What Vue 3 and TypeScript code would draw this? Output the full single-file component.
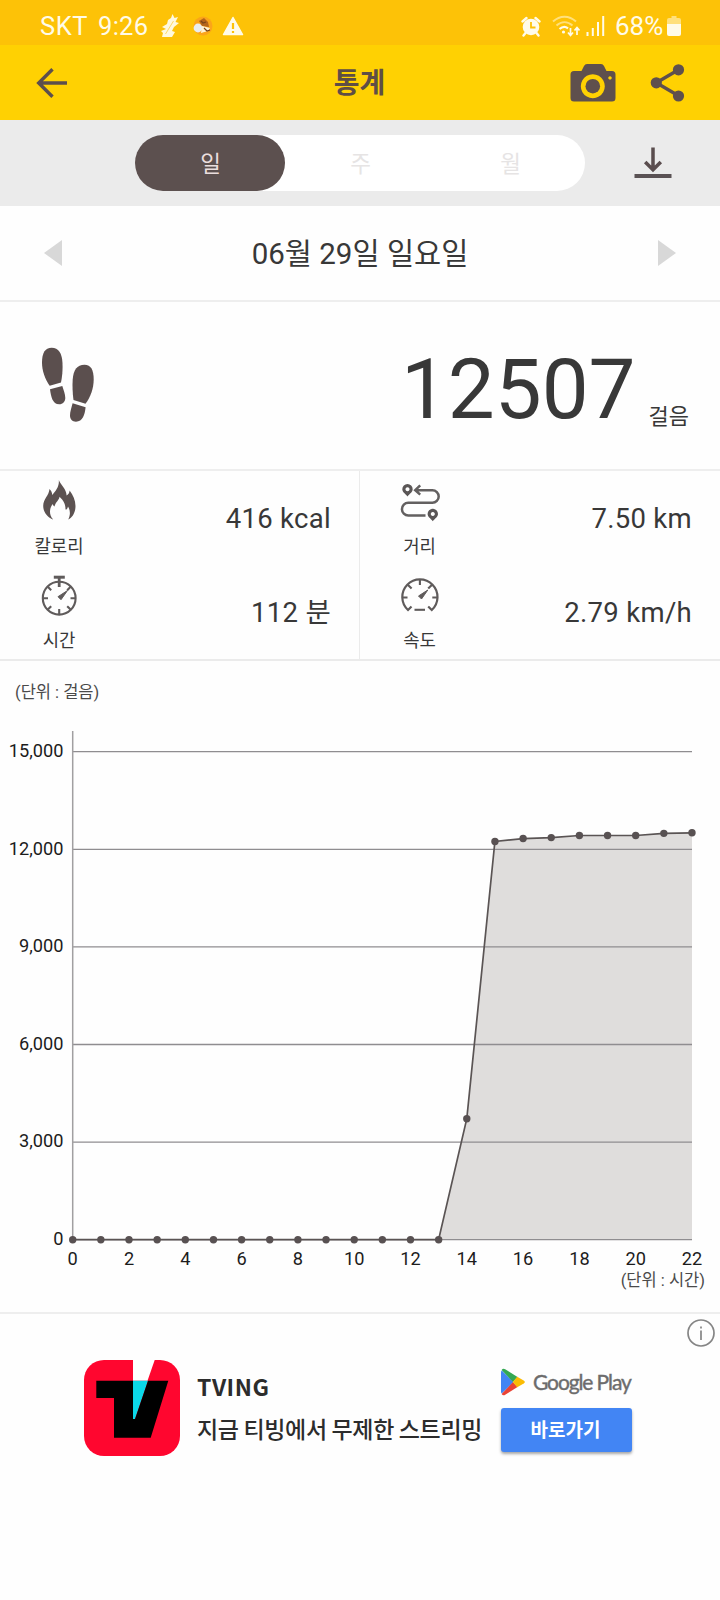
<script setup lang="ts">
const yTicks: number[] = [0, 3000, 6000, 9000, 12000, 15000]
const steps: number[] = [
  0, 0, 0, 0, 0, 0, 0, 0, 0, 0, 0, 0, 0, 0,
  3720, 12240, 12330, 12360, 12425, 12425, 12425, 12490, 12507,
]

const left = 72.7
const right = 692
const bottom = 578.7
const unit = 97.6 / 3000

const px = (hour: number): number => left + (hour * (right - left)) / 22
const py = (value: number): number => bottom - value * unit

const points = steps.map((value, hour) => ({ x: px(hour), y: py(value) }))
const line = points.map((p) => `${p.x.toFixed(1)},${p.y.toFixed(1)}`).join(' ')
const area = `${left},${bottom} ${line} ${right},${bottom}`
const xTicks = steps.map((_, hour) => hour).filter((hour) => hour % 2 === 0)
</script>

<template>
  <div class="screen">
    <div class="status">
      <span class="carrier">SKT</span>
      <span class="clock">9:26</span>
      <svg class="s-bolt" width="20" height="26" viewBox="0 0 20 26">
        <path d="M12.500 1l2 4 3.500-1-2.500 5 3.500 1-5 4-2 4 3 1-3 5H2l1-4-2-2 5-2-4-2 5-3 1-4 3-2z" fill="#fff9df" />
        <path d="M5.500 21l8-13" stroke="#fdd96a" stroke-width="1" />
      </svg>
      <svg class="s-face" width="20" height="20" viewBox="0 0 20 20">
        <circle cx="10" cy="10" r="9.500" fill="#fba519" />
        <path d="M6 5l5-3 4 4 1 5-7-1z" fill="#b5651a" />
        <circle cx="5" cy="12" r="4.400" fill="#e9edf0" />
        <path d="M9 10l8 2-2 3-7 2z" fill="#fff3d5" />
        <path d="M8 5l2 2 3-1M11 12l3 3 3-1" stroke="#7a4518" stroke-width="1.200" fill="none" />
      </svg>
      <svg class="s-warn" width="22" height="20" viewBox="0 0 22 20">
        <path d="M11 1.500L20.500 18.500H1.500z" fill="#fffbe9" stroke="#fffbe9" stroke-width="1.500" stroke-linejoin="round" />
        <path d="M11 7v6M11 15v2" stroke="#fdc207" stroke-width="2.200" />
      </svg>
      <span class="grow"></span>
      <svg class="s-alarm" width="20" height="21" viewBox="0 0 20 21">
        <circle cx="10" cy="11" r="8.300" fill="#fffbe9" />
        <path d="M1.500 5.500l4-3.500M18.500 5.500l-4-3.500M4.500 17l-2 2.500M15.500 17l2 2.500" stroke="#fffbe9" stroke-width="2.400" stroke-linecap="round" />
        <path d="M10 6v5.500h4.500" stroke="#fdc207" stroke-width="1.800" fill="none" />
      </svg>
      <svg class="s-wifi" width="28" height="22" viewBox="0 0 28 22">
        <path d="M1 6.500c7-6.500 16-6.500 23 0M4.500 10.500c5-4.500 11-4.500 16 0" stroke="#ffe07c" stroke-width="2" fill="none" />
        <path d="M7.500 14c3-2.700 6-2.700 8.500-.7" stroke="#fffbe9" stroke-width="2.200" fill="none" />
        <circle cx="11.500" cy="17" r="1.600" fill="#fffbe9" />
        <path d="M18.500 13v7M16 17.500l2.500 3 2.500-3M25 20v-7M22.500 15.500l2.500-3 2.500 3" stroke="#fffbe9" stroke-width="1.700" fill="none" />
      </svg>
      <svg class="s-signal" width="19" height="20" viewBox="0 0 19 20">
        <path d="M1.500 16v4M6.800 12v8M12 6v14M17.200 0v20" stroke="#fffbe9" stroke-width="2" />
      </svg>
      <span class="percent">68%</span>
      <svg class="s-batt" width="14" height="20" viewBox="0 0 14 20">
        <path d="M4.500 0h5v2H12q2 0 2 2v4H0V4q0-2 2-2h2.500z" fill="#ffe07c" />
        <path d="M0 8h14v10q0 2-2 2H2q-2 0-2-2z" fill="#fffbe9" />
      </svg>
    </div>

    <header class="header">
      <svg class="back" width="32" height="32" viewBox="0 0 32 32">
        <path d="M31 16H3.500M16.500 2.200L2.700 16l13.800 13.800" fill="none" stroke="#5d4f4d" stroke-width="3.400" />
      </svg>
      <h1 class="title">통계</h1>
      <div class="actions">
        <svg width="46" height="40" viewBox="0 0 46 40">
          <path fill-rule="evenodd" fill="#5f504d" d="M11.500 8L14 3q1-2 3-2h14q2 0 3 2l2.500 5H42q3.500 0 3.500 3.500V35q0 3.500-3.500 3.500H4Q.5 38.500.5 35V11.500Q.5 8 4 8zM22.800 11.200a12 12 0 1 0 .01 0zM40 13.200a1.700 1.700 0 1 0 .01 0z" />
          <circle cx="22.800" cy="23.200" r="7.300" fill="#5f504d" />
        </svg>
        <svg class="share" width="35" height="40" viewBox="0 0 35 40">
          <path d="M28.500 6.800L6.300 19.800l22.200 13" fill="none" stroke="#5f504d" stroke-width="3.400" />
          <circle cx="28.500" cy="6.800" r="5.600" fill="#5f504d" />
          <circle cx="6.300" cy="19.800" r="5.600" fill="#5f504d" />
          <circle cx="28.500" cy="33" r="5.600" fill="#5f504d" />
        </svg>
      </div>
    </header>

    <nav class="period">
      <div class="pill">
        <button class="tab active">일</button>
        <button class="tab">주</button>
        <button class="tab">월</button>
      </div>
      <svg class="download" width="38" height="34" viewBox="0 0 38 34">
        <path d="M19 1.500v21M11.200 16L19 23.800 26.800 16" fill="none" stroke="#5a4d4e" stroke-width="3.500" />
        <path d="M.500 30h37" stroke="#5a5254" stroke-width="3.800" />
      </svg>
    </nav>

    <section class="date">
      <svg width="18" height="26" viewBox="0 0 18 26"><path d="M18 0v26L0 13z" fill="#d8d8d8" /></svg>
      <span class="date-text">06월 29일 일요일</span>
      <svg width="18" height="26" viewBox="0 0 18 26"><path d="M0 0v26l18-13z" fill="#d8d8d8" /></svg>
    </section>

    <section class="total">
      <svg class="feet" width="60" height="86" viewBox="0 0 60 86" fill="#5b4f4e">
        <path d="M13.700 7.700C20.500 7.700 24 13 24.500 23 24.800 30 24.300 36 23 42.500L11.700 45.700C7 39 4 31 4 22.500 4 13 7 7.700 13.700 7.700z" />
        <path d="M12 49.300L24.300 46c1.200 4 3 8 3 12 0 3.500-2.500 6.300-6 6.300-7 0-8.300-8-9.300-15z" />
        <path d="M46.500 24.700c6.500 0 9.200 5.300 9.200 14.800 0 9-3.200 17.500-8.200 24.300L35.500 60C34.500 53 34.300 46 34.700 39.500 35.300 30 39 24.700 46.500 24.700z" />
        <path d="M34.600 63.300l13 4c-.8 7.500-2.800 14.400-9.600 14.400-3.700 0-6-2.500-6-6.200 0-4 1.600-8 2.600-12.200z" />
      </svg>
      <div class="count">
        <span class="number">12507</span>
        <span class="step-unit">걸음</span>
      </div>
    </section>

    <section class="metrics">
      <div class="metric">
        <div class="kind">
          <svg width="48" height="48" viewBox="0 0 48 48">
            <path fill="#5c5251" d="M23.800 1C26 6.500 31.300 9.500 31.600 16.500 33.500 15.500 34.500 13.500 34.600 11.500 38 16 40.500 21 40.500 27 40.500 33.500 37.500 38.500 33.200 40.500 35.500 36 35.500 31.500 33 27.500 32.500 29.500 32 30.500 30.500 30.500 30.500 25 28.500 21.500 24.500 17.700 24.300 21 20.500 23 19.500 27.500 18.500 27 18 26 17.800 25 14.500 29 13.500 35.500 18.200 40.500 12.500 38.500 8.200 33 8.200 27 8.200 20 14 16.500 14.500 10 16.500 12 17 13.500 17.200 16 21 12 24.500 7 23.800 1z" />
          </svg>
          <span>칼로리</span>
        </div>
        <span class="value">416 kcal</span>
      </div>
      <div class="metric end">
        <div class="kind">
          <svg width="48" height="48" viewBox="0 0 48 48">
            <path d="M19.500 11.200h16.900a6.300 6.300 0 0 1 0 12.600H12.300a6.350 6.350 0 0 0 0 12.700h17.200M24.200 6.300l-5 4.900 5 4.400" fill="none" stroke="#636060" stroke-width="2.500" />
            <path fill-rule="evenodd" fill="#5a5656" d="M11.500 5a5.200 5.200 0 0 1 5.200 5.200c0 3-3.300 4.600-5.200 7.300-1.900-2.700-5.200-4.300-5.200-7.300a5.200 5.200 0 0 1 5.200-5.200zm0 3.200a2 2 0 1 0 .01 0zM36.800 29.800a5.200 5.200 0 0 1 5.200 5.200c0 3-3.300 4.600-5.200 7.300-1.900-2.700-5.200-4.300-5.200-7.300a5.200 5.200 0 0 1 5.200-5.200zm0 3.200a2 2 0 1 0 .01 0z" />
          </svg>
          <span>거리</span>
        </div>
        <span class="value">7.50 km</span>
      </div>
      <div class="metric">
        <div class="kind">
          <svg width="48" height="48" viewBox="0 0 48 48" fill="none" stroke="#5f5b5b">
            <circle cx="24.200" cy="25.200" r="16.400" stroke-width="2.100" />
            <path d="M18.800 4.200h11" stroke-width="3" />
            <path d="M24.200 4v10" stroke-width="2.800" />
            <path d="M24.200 36v5M8 25.200h5M35.500 25.200h5M12.800 13.800l3.400 3.400M35.600 13.800l-3.400 3.400M12.800 36.600l3.400-3.400M35.600 36.600l-3.400-3.400" stroke-width="2.100" />
            <path d="M32.500 17.500l-6.500 9.200-3-3z" fill="#5f5b5b" stroke-width="1" />
          </svg>
          <span>시간</span>
        </div>
        <span class="value">112 분</span>
      </div>
      <div class="metric end">
        <div class="kind">
          <svg width="48" height="48" viewBox="0 0 48 48" fill="none" stroke="#5f5b5b">
            <path d="M15.500 33.500l-3.500 3.500A17.600 17.600 0 1 1 35.800 37l-3.600-3.500" stroke-width="2.200" />
            <path d="M23.900 7v5M6.500 24.500h5M36.300 24.500h5M12 12l3.600 3.600M35.800 12l-3.600 3.600" stroke-width="2.100" />
            <path d="M18.500 36.800h10.500" stroke-width="2.100" />
            <path d="M31.800 17l-6.300 9-3-3z" fill="#5f5b5b" stroke-width="1" />
          </svg>
          <span>속도</span>
        </div>
        <span class="value">2.79 km/h</span>
      </div>
    </section>

    <section class="chart">
      <p class="unit y-unit">(단위 : 걸음)</p>
      <svg class="plot" width="720" height="651" viewBox="0 0 720 651">
        <polygon :points="area" fill="#dfdddc" />
        <path
          v-for="t in yTicks"
          :key="t"
          :d="`M${left} ${py(t)}H${right}`"
          stroke="#8f8d90"
          stroke-width="1.3"
        />
        <path :d="`M${left} 70V${bottom}`" stroke="#a19fa1" stroke-width="1.5" />
        <polyline :points="line" fill="none" stroke="#5a5454" stroke-width="1.7" />
        <circle v-for="(p, i) in points" :key="i" :cx="p.x" :cy="p.y" r="3.700" fill="#585152" />
        <text v-for="t in yTicks" :key="'y' + t" class="tick" x="63.500" :y="py(t) + 5.300" text-anchor="end">
          {{ t.toLocaleString('en-US') }}
        </text>
        <text v-for="t in xTicks" :key="'x' + t" class="tick" :x="px(t)" y="603.500" text-anchor="middle">{{ t }}</text>
      </svg>
      <p class="unit x-unit">(단위 : 시간)</p>
    </section>

    <aside class="ad">
      <svg class="logo" width="96" height="96" viewBox="0 0 96 96">
        <rect width="96" height="96" rx="20" fill="#ff062f" />
        <path d="M49 0h21.700l-7.200 20.700H49z" fill="#fff" />
        <path d="M49 20.700h15L51 59h-2z" fill="#0bd8e9" />
        <path d="M12.300 20.700H49V59h2l13-38.300h20.300l-17.600 57H30V38H12.300z" fill="#000" />
      </svg>
      <div class="copy">
        <strong>TVING</strong>
        <span>지금 티빙에서 무제한 스트리밍</span>
      </div>
      <div class="store">
        <div class="play">
          <svg width="24" height="28" viewBox="0 0 24 28">
            <path d="M.800 2.500L12.500 14 .800 25.500Q0 25 0 23.500v-19Q0 3 .800 2.500z" fill="#4285f4" />
            <path d="M.600 2Q2 0 4.200 1.300L16.500 9 12 14z" fill="#34a853" />
            <path d="M.600 26Q2 28 4.200 26.700L16.500 19 12 14z" fill="#ea4335" />
            <path d="M16.200 8.800l6.500 3.700q2.300 1.500 0 3l-6.500 3.700L11.800 14z" fill="#fbbc04" />
          </svg>
          <span>Google Play</span>
        </div>
        <button class="go">바로가기</button>
      </div>
      <svg class="info" width="28" height="28" viewBox="0 0 28 28" fill="none" stroke="#858585">
        <circle cx="14" cy="14" r="13" stroke-width="1.700" />
        <path d="M14 11.500V21M14 7.500v2" stroke-width="1.700" />
      </svg>
    </aside>
  </div>
</template>

<style>
body {
  margin: 0;
  background: #fefefe;
}
</style>

<style scoped>
.screen {
  width: 720px;
  height: 1600px;
  overflow: hidden;
  background: #fefefe;
  color: #383838;
  font-family: Roboto, 'Noto Sans CJK KR', sans-serif;
}
.screen svg {
  display: block;
  flex: none;
}
.status {
  display: flex;
  align-items: center;
  box-sizing: border-box;
  height: 45px;
  padding: 7px 39px 0 40px;
  background: #fdc207;
  color: #fffbe9;
  font-size: 25.500px;
  line-height: 38px;
}
.carrier {
  width: 58px;
  letter-spacing: 0.6px;
}
.clock {
  width: 62px;
  letter-spacing: 0.3px;
}
.s-face {
  margin-left: 13px;
}
.s-warn {
  margin-left: 9px;
}
.grow {
  flex: 1;
}
.s-wifi {
  margin-left: 11px;
}
.s-signal {
  margin-left: 6px;
}
.percent {
  width: 52px;
  margin-left: 10px;
  font-size: 26px;
}
.header {
  display: grid;
  grid-template-columns: 150px 1fr 150px;
  align-items: center;
  height: 75px;
  box-sizing: border-box;
  padding: 0 35px 0 36px;
  background: #ffd102;
}
.title {
  margin: 0;
  padding: 3px 2px 0 0;
  text-align: center;
  font-size: 28px;
  line-height: 40px;
  font-weight: 700;
  color: #5f4e45;
}
.actions {
  display: flex;
  justify-content: flex-end;
}
.share {
  margin-left: 34px;
}
.period {
  display: flex;
  align-items: center;
  box-sizing: border-box;
  height: 86px;
  padding: 0 0 1px 135px;
  background: #ebebeb;
}
.pill {
  display: flex;
  width: 450px;
  height: 56px;
  border-radius: 28px;
  background: #fff;
}
.tab {
  width: 150px;
  padding: 0 0 0 1px;
  border: 0;
  border-radius: 28px;
  background: none;
  font: 22.500px/58px Roboto, 'Noto Sans CJK KR', sans-serif;
  color: #e6e4e4;
}
.tab.active {
  background: #5c504f;
  color: #eadede;
}
.download {
  margin: 1px 0 0 49px;
}
.date {
  display: flex;
  align-items: center;
  justify-content: space-between;
  height: 94px;
  padding: 0 44px;
  border-bottom: 2px solid #eee;
}
.date-text {
  padding-top: 2px;
  font-size: 29.500px;
  line-height: 40px;
}
.total {
  display: flex;
  justify-content: space-between;
  box-sizing: border-box;
  height: 169px;
  padding: 38px 31px 0 38px;
  border-bottom: 2px solid #eee;
}
.count {
  display: flex;
  align-items: flex-end;
  height: 100px;
}
.number {
  font-size: 83.500px;
  line-height: 100px;
}
.step-unit {
  margin: 0 0 8px 13px;
  font-size: 22px;
  line-height: 30px;
}
.metrics {
  display: grid;
  grid-template: 94px 94px / 360px 360px;
  border-bottom: 2px solid #ebebeb;
}
.metric {
  display: flex;
  align-items: center;
  justify-content: space-between;
  box-sizing: border-box;
  padding-right: 28px;
  border-right: 1px solid #ebebeb;
}
.metric.end {
  border-right: 0;
}
.kind {
  display: flex;
  flex-direction: column;
  align-items: center;
  width: 118px;
  height: 78px;
  font-size: 17.800px;
  line-height: 24px;
}
.end .kind {
  width: 119px;
}
.kind svg {
  margin-bottom: 8px;
}
.value {
  padding-top: 2px;
  font-size: 27.500px;
  line-height: 40px;
  letter-spacing: 0.3px;
}
.chart {
  position: relative;
  height: 651px;
  border-bottom: 2px solid #eee;
}
.unit {
  position: absolute;
  margin: 0;
  font-size: 16.500px;
  line-height: 24px;
  color: #4a4a4a;
}
.y-unit {
  left: 15px;
  top: 20px;
}
.x-unit {
  right: 15px;
  bottom: 19px;
}
.tick {
  font-size: 18.200px;
  fill: #1c1c1c;
}
.ad {
  position: relative;
  display: flex;
  padding: 46px 0 0 84px;
}
.copy {
  display: flex;
  flex-direction: column;
  width: 303px;
  margin-left: 17px;
  font-family: 'Noto Sans CJK KR', sans-serif;
  font-size: 23px;
  line-height: 42px;
  white-space: nowrap;
  letter-spacing: -0.35px;
  font-weight: 500;
  color: #2c2c2c;
}
.copy strong {
  padding-top: 5px;
  letter-spacing: 0.5px;
}
.store {
  width: 131px;
  margin-left: 1px;
}
.play {
  display: flex;
  align-items: center;
  height: 28px;
  margin-top: 8px;
  font-family: Lato, sans-serif;
  font-size: 21px;
  white-space: nowrap;
  letter-spacing: -1.1px;
  color: #6c6c6c;
}
.play span {
  margin: -2px 0 0 8px;
  -webkit-text-stroke: 0.4px #6c6c6c;
}
.go {
  width: 131px;
  height: 44px;
  margin-top: 12px;
  padding: 0 2px 3px 0;
  border: 0;
  border-radius: 3px;
  background: #4285f4;
  box-shadow: 0 2px 3px rgba(0, 0, 0, 0.35);
  color: #fff;
  font: 700 19px/40px 'Noto Sans CJK KR', sans-serif;
}
.info {
  position: absolute;
  left: 687px;
  top: 5px;
}
</style>
